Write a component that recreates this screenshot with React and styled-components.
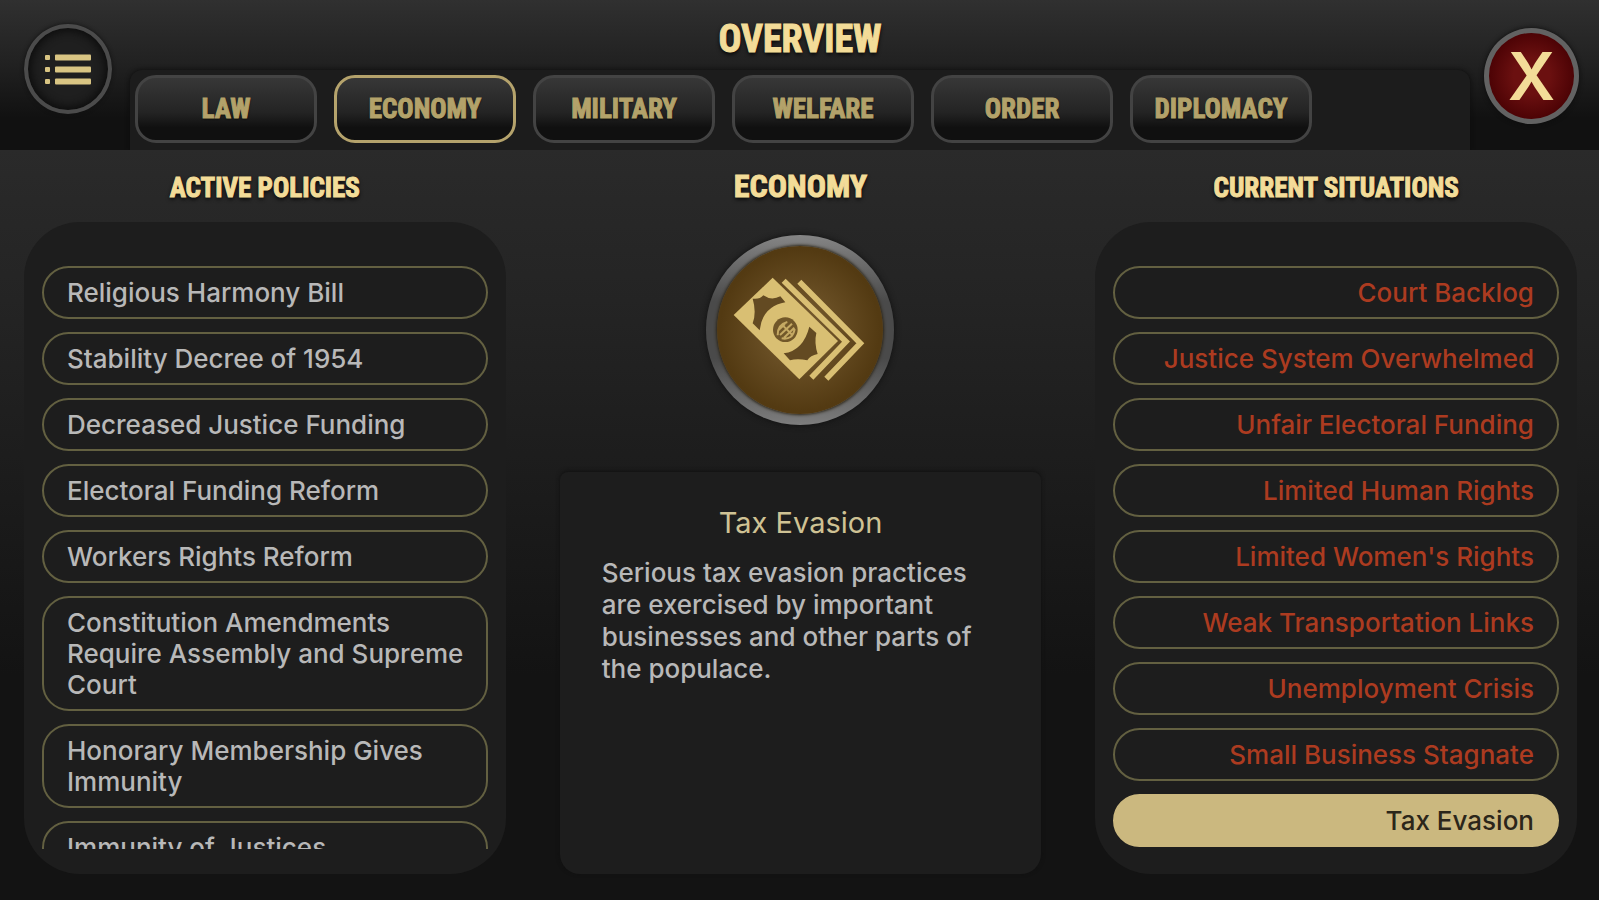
import { useState } from 'react'
import styled, { createGlobalStyle } from 'styled-components'

const colors = {
    gold: '#f3dc98',
    goldDim: '#b3a26a',
    goldLine: '#636041',
    selected: '#cbb87f',
    text: '#b8b8b8',
    danger: '#ac3b20',
    panel: '#1d1d1d',
}

const fonts = {
    title: '"Roboto Condensed", "Open Sans Condensed", Roboto, sans-serif',
    text: 'Inter, Roboto, sans-serif',
}

const GlobalStyle = createGlobalStyle`
    * {
        box-sizing: border-box;
    }
    body {
        margin: 0;
        background-color: #131313;
    }
    button {
        cursor: pointer;
    }
`

const StyledPage = styled.div`
    display: flex;
    flex-direction: column;
    height: 100vh;
    min-height: 600px;
    font-family: ${fonts.text};
    color: ${colors.text};
    background: #131313;
`
const StyledHeader = styled.header`
    display: grid;
    grid-template-columns: 130px 1fr 129px;
    height: 150px;
    flex-shrink: 0;
    background: linear-gradient(#303030 0, #212121 64px, #111111 118px);
`
const StyledHeaderCenter = styled.div`
    display: flex;
    flex-direction: column;
    min-width: 0;
`
const StyledTitle = styled.h1`
    margin: 0;
    height: 70px;
    padding-top: 9px;
    font-family: ${fonts.title};
    font-size: 38px;
    line-height: 60px;
    font-weight: 700;
    text-align: center;
    text-shadow: 0 2px 4px #000000;
    color: ${colors.gold};
    -webkit-text-stroke: 1px ${colors.gold};
`
const StyledTabs = styled.nav`
    display: flex;
    align-items: flex-start;
    gap: 17px;
    flex: 1;
    padding: 5px;
    background-color: #1c1c1c;
    border-radius: 12px 12px 0 0;
    box-shadow: 0 0 5px #0c0c0c;
    clip-path: inset(-6px -6px 0 -6px);
`
const StyledTab = styled.button`
    width: 182px;
    height: 68px;
    padding: 0;
    border: 3px solid ${({ $active }) => ($active ? '#b5a36c' : '#434343')};
    border-radius: 21px;
    background: linear-gradient(#373737, #242424 55%, #101010 80%);
    font-family: ${fonts.title};
    font-size: 27px;
    font-weight: 700;
    color: ${colors.goldDim};
    -webkit-text-stroke: 1px ${colors.goldDim};
    text-shadow: 0 1px 2px #000000;
`
const StyledMenuButton = styled.button`
    display: flex;
    align-items: center;
    justify-content: center;
    width: 88px;
    height: 90px;
    margin: 24px 0 0 24px;
    padding: 0;
    border: 4px solid #4b4b4b;
    border-radius: 50%;
    background: #1f1f1f;
    box-shadow: inset 0 0 8px 3px #0d0d0d, 0 0 4px #111111;
`
const StyledCloseButton = styled.button`
    width: 95px;
    height: 96px;
    margin: 28px 0 0 14px;
    padding: 0;
    border: 5px solid #626262;
    border-radius: 50%;
    background: radial-gradient(#6b1010 30%, #4d0305 70%);
    box-shadow: 0 0 5px #0c0c0c;
    font-family: ${fonts.text};
    font-size: 66px;
    line-height: 84px;
    font-weight: 600;
    color: ${colors.gold};
`
const StyledBody = styled.main`
    display: grid;
    grid-template-columns: repeat(3, minmax(0, 1fr));
    grid-template-rows: minmax(0, 1fr);
    gap: 54px;
    flex: 1;
    min-height: 0;
    padding: 0 22px 26px 24px;
    background: linear-gradient(#2a2a2a, #242424 20%, #131313 70%);
`
const StyledColumn = styled.section`
    display: flex;
    flex-direction: column;
    min-height: 0;
`
const StyledColumnTitle = styled.h2`
    margin: 0;
    height: 72px;
    flex-shrink: 0;
    font-family: ${fonts.title};
    font-size: ${({ $large }) => ($large ? 32 : 27)}px;
    line-height: ${({ $large }) => ($large ? 72 : 76)}px;
    font-weight: 700;
    text-align: center;
    text-shadow: 0 2px 4px #000000;
    color: ${colors.gold};
    -webkit-text-stroke: 1px ${colors.gold};
`
const StyledPanel = styled.div`
    display: flex;
    flex: 1;
    min-height: 0;
    padding: 44px 18px 25px;
    background-color: ${colors.panel};
    border-radius: 56px;
`
const StyledList = styled.ul`
    display: flex;
    flex-direction: column;
    gap: 13px;
    flex: 1;
    margin: 0;
    padding: 0;
    list-style: none;
    overflow-y: auto;
    scrollbar-width: none;
`
const StyledItem = styled.button`
    display: block;
    width: 100%;
    padding: ${({ $situation }) => ($situation ? '9px 23px' : '9px 12px 9px 23px')};
    border: 2px solid ${({ $selected }) => ($selected ? colors.selected : colors.goldLine)};
    border-radius: 27px;
    background-color: ${({ $selected }) => ($selected ? colors.selected : 'transparent')};
    font-family: ${fonts.text};
    font-size: 26px;
    line-height: 31px;
    font-weight: 500;
    text-align: ${({ $situation }) => ($situation ? 'right' : 'left')};
    color: ${({ $situation, $selected }) =>
        $selected ? '#2b261a' : $situation ? colors.danger : colors.text};
`
const StyledCoin = styled.div`
    align-self: center;
    display: flex;
    width: 188px;
    height: 190px;
    flex-shrink: 0;
    margin: 13px 0 47px;
    padding: 11px;
    border-radius: 50%;
    background: linear-gradient(#858585, #4a4a4a 35%, #4a4a4a 65%, #7d7d7d);
    box-shadow: 0 0 6px #101010;
`
const StyledCoinFace = styled.div`
    flex: 1;
    border-radius: 50%;
    background: radial-gradient(#72572c 15%, #533a12 68%);
    box-shadow: 0 0 3px 1px #2b2416;
`
const StyledCard = styled.article`
    flex: 1;
    min-height: 0;
    padding: 33px 42px;
    background-color: ${colors.panel};
    border-radius: 8px 8px 20px 20px;
    box-shadow: 0 -1px 4px #101010;
`
const StyledCardTitle = styled.h3`
    margin: 0 0 16px;
    font-size: 29px;
    line-height: 36px;
    font-weight: 400;
    text-align: center;
    color: #cfc294;
`
const StyledCardText = styled.p`
    margin: 0;
    font-size: 26px;
    line-height: 32px;
    font-weight: 500;
`

const tabs = ['LAW', 'ECONOMY', 'MILITARY', 'WELFARE', 'ORDER', 'DIPLOMACY']

const policies = [
    'Religious Harmony Bill',
    'Stability Decree of 1954',
    'Decreased Justice Funding',
    'Electoral Funding Reform',
    'Workers Rights Reform',
    'Constitution Amendments Require Assembly and Supreme Court',
    'Honorary Membership Gives Immunity',
    'Immunity of Justices',
]

const situations = [
    'Court Backlog',
    'Justice System Overwhelmed',
    'Unfair Electoral Funding',
    'Limited Human Rights',
    "Limited Women's Rights",
    'Weak Transportation Links',
    'Unemployment Crisis',
    'Small Business Stagnate',
    'Tax Evasion',
]

function ListIcon() {
    return (
        <svg width="46" height="32" viewBox="0 0 46 32" fill="#d9c583">
            {[2, 14, 26].map((y) => (
                <g key={y}>
                    <rect x="0" y={y} width="5" height="5" rx="1" />
                    <rect x="10" y={y - 0.5} width="36" height="6" rx="1" />
                </g>
            ))}
        </svg>
    )
}

function MoneyIcon() {
    return (
        <svg width="100%" height="100%" viewBox="83 83 498 504">
            <g fill="none" stroke="#d9bf73" strokeWidth="17" strokeLinejoin="miter">
                <path d="M283 187 L470 370 L366 478" />
                <path d="M330 190 L513 375 L411 481" />
            </g>
            <path d="M250 178 L133 290 L330 483 L446 368 Z" fill="#d9bf73" />
            <path
                d="M190 241 Q211 244 222 231 Q246 248 273 234 L288 252 Q232 262 216 312 L211 336 L190 315 Q202 282 190 241 Z"
                fill="#634a22"
            />
            <path
                d="M360 325 L381 344 Q374 374 385 407 Q363 411 354 426 Q324 419 302 426 L283 405 Q342 397 360 325 Z"
                fill="#634a22"
            />
            <circle cx="288" cy="334" r="37" fill="#715729" />
            <path
                d="M265 351 Q264 319 294 311 M277 360 Q310 366 316 332 M267 336 L287 317 M272 350 L308 316 M284 358 L315 328 M278 319 L309 350"
                fill="none"
                stroke="#c5a963"
                strokeWidth="6"
            />
        </svg>
    )
}

function ItemList({ items, situation, selected, onSelect }) {
    return (
        <StyledPanel>
            <StyledList>
                {items.map((item) => (
                    <li key={item}>
                        <StyledItem
                            type="button"
                            $situation={situation}
                            $selected={item === selected}
                            onClick={() => onSelect(item)}
                        >
                            {item}
                        </StyledItem>
                    </li>
                ))}
            </StyledList>
        </StyledPanel>
    )
}

function App() {
    const [activeTab, setActiveTab] = useState('ECONOMY')
    const [selected, setSelected] = useState('Tax Evasion')

    return (
        <StyledPage>
            <GlobalStyle />
            <StyledHeader>
                <StyledMenuButton type="button" aria-label="Menu">
                    <ListIcon />
                </StyledMenuButton>
                <StyledHeaderCenter>
                    <StyledTitle>OVERVIEW</StyledTitle>
                    <StyledTabs>
                        {tabs.map((tab) => (
                            <StyledTab
                                key={tab}
                                type="button"
                                $active={tab === activeTab}
                                onClick={() => setActiveTab(tab)}
                            >
                                {tab}
                            </StyledTab>
                        ))}
                    </StyledTabs>
                </StyledHeaderCenter>
                <StyledCloseButton type="button" aria-label="Close">
                    X
                </StyledCloseButton>
            </StyledHeader>
            <StyledBody>
                <StyledColumn>
                    <StyledColumnTitle>ACTIVE POLICIES</StyledColumnTitle>
                    <ItemList items={policies} selected={selected} onSelect={setSelected} />
                </StyledColumn>
                <StyledColumn>
                    <StyledColumnTitle $large>{activeTab}</StyledColumnTitle>
                    <StyledCoin>
                        <StyledCoinFace>
                            <MoneyIcon />
                        </StyledCoinFace>
                    </StyledCoin>
                    <StyledCard>
                        <StyledCardTitle>{selected}</StyledCardTitle>
                        <StyledCardText>
                            Serious tax evasion practices are exercised by important businesses and
                            other parts of the populace.
                        </StyledCardText>
                    </StyledCard>
                </StyledColumn>
                <StyledColumn>
                    <StyledColumnTitle>CURRENT SITUATIONS</StyledColumnTitle>
                    <ItemList
                        items={situations}
                        situation
                        selected={selected}
                        onSelect={setSelected}
                    />
                </StyledColumn>
            </StyledBody>
        </StyledPage>
    )
}

export default App
